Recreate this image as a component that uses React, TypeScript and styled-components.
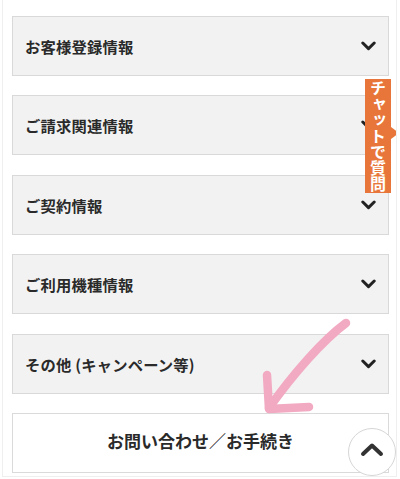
import React from "react"
import styled, { createGlobalStyle } from "styled-components"

const GlobalStyle = createGlobalStyle`
  html, body {
    margin: 0;
    padding: 0;
    background: #fff;
  }
  body {
    font-family: "Noto Sans CJK JP", "Noto Sans", sans-serif;
    color: #222;
  }
`

const Page = styled.div`
  position: relative;
  box-sizing: border-box;
  width: 395px;
  height: 477px;
  margin-left: 2px;
  border: 1px solid #efefef;
  border-top: none;
  padding: 16px 7px 0 9px;
  display: flex;
  flex-direction: column;
  gap: 19.4px;
  overflow: hidden;
`

const Item = styled.div`
  box-sizing: border-box;
  height: 60px;
  background: #f2f2f2;
  border: 1px solid #d9d9d9;
  display: flex;
  align-items: center;
  justify-content: space-between;
  padding: 0 12px 0 12px;
`

const ItemLabel = styled.span`
  font-size: 15.3px;
  font-weight: 700;
  color: #2a2a2a;
  letter-spacing: 0.2px;
`

const Chevron = styled.svg<{ $up?: boolean }>`
  width: 15px;
  height: 10px;
  transform: ${p => (p.$up ? "rotate(180deg)" : "none")};
`

const ContactButton = styled.div`
  box-sizing: border-box;
  height: 60px;
  background: #fff;
  border: 1px solid #dadada;
  display: flex;
  align-items: center;
  justify-content: center;
  font-size: 17px;
  font-weight: 700;
  color: #2a2a2a;
  padding-bottom: 4px;
`

const ChatTab = styled.div`
  position: absolute;
  left: 362px;
  top: 79px;
  width: 26px;
  height: 114px;
  background: #e8763a;
  color: #fff;
  font-size: 16px;
  font-weight: 700;
  writing-mode: vertical-rl;
  text-orientation: upright;
  display: flex;
  align-items: center;
  justify-content: center;
  letter-spacing: 0;
  line-height: 26px;
  &::after {
    content: "";
    position: absolute;
    right: -8px;
    top: 48px;
    border-top: 6px solid transparent;
    border-bottom: 6px solid transparent;
    border-left: 8px solid #e8763a;
  }
`

const Arrow = styled.svg`
  position: absolute;
  left: 250px;
  top: 312px;
  width: 110px;
  height: 110px;
  pointer-events: none;
`

const ScrollTop = styled.div`
  position: absolute;
  left: 345px;
  top: 428px;
  width: 48px;
  height: 48px;
  border-radius: 50%;
  background: #fff;
  border: 1px solid #d6d6d6;
  display: flex;
  align-items: center;
  justify-content: center;
  padding-bottom: 6px;
  box-sizing: border-box;
`

const items = [
  "お客様登録情報",
  "ご請求関連情報",
  "ご契約情報",
  "ご利用機種情報",
  "その他 (キャンペーン等)",
]

const ChevronIcon = ({ up }: { up?: boolean }) => (
  <Chevron $up={up} viewBox="0 0 15 10">
    <polyline
      points="1.8,2 7.5,7.6 13.2,2"
      fill="none"
      stroke="#222"
      strokeWidth="3"
      strokeLinecap="round"
      strokeLinejoin="round"
    />
  </Chevron>
)

const App = () => {
  return (
    <>
      <GlobalStyle />
      <Page>
        {items.map(label => (
          <Item key={label}>
            <ItemLabel>{label}</ItemLabel>
            <ChevronIcon />
          </Item>
        ))}
        <ContactButton>お問い合わせ／お手続き</ContactButton>
        <ChatTab>チャットで質問</ChatTab>
        <Arrow viewBox="0 0 110 110">
          <g
            fill="none"
            stroke="#f2a9c2"
            strokeWidth="8.5"
            strokeLinecap="round"
            strokeLinejoin="round"
          >
            <path d="M93 11 C70 28 40 62 16 96" />
            <path d="M14 63 L16 97 L56 95" />
          </g>
        </Arrow>
        <ScrollTop>
          <svg width="24" height="16" viewBox="0 0 24 16">
            <polyline
              points="3,13 12,4.5 21,13"
              fill="none"
              stroke="#333"
              strokeWidth="4"
              strokeLinecap="round"
              strokeLinejoin="round"
            />
          </svg>
        </ScrollTop>
      </Page>
    </>
  )
}

export default App
